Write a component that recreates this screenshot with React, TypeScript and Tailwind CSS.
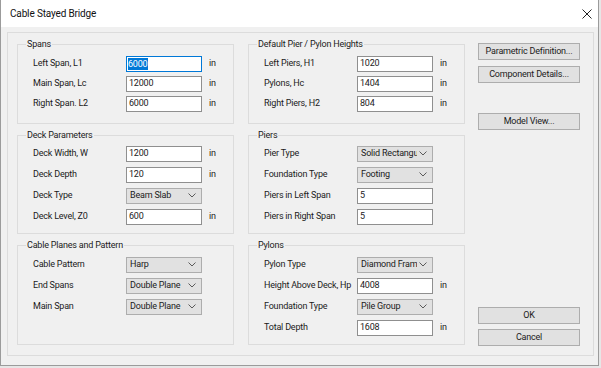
import React from 'react';

type RowKind = 'short' | 'tall';

const rowH: Record<RowKind, string> = {
  short: 'h-[20px]',
  tall: 'h-[21px]',
};

function Chevron() {
  return (
    <svg width="8" height="5" viewBox="0 0 8 5" className="shrink-0">
      <polyline points="0.5,0.5 4,4 7.5,0.5" fill="none" stroke="#5a5a5a" strokeWidth="1" />
    </svg>
  );
}

function TextRow({
  label,
  value,
  unit,
  focused,
  kind = 'tall',
}: {
  label: string;
  value: string;
  unit?: boolean;
  focused?: boolean;
  kind?: RowKind;
}) {
  return (
    <div className={`flex items-center pl-[15px] ${rowH[kind]}`}>
      <span className="w-[93px] shrink-0 whitespace-nowrap">{label}</span>
      <div
        className={
          focused
            ? 'h-[16px] w-[76px] bg-white border border-[#0078d7] flex items-center pl-[1px]'
            : 'h-[16px] w-[76px] bg-white border border-[#8f8f8f] flex items-center pl-[2px]'
        }
      >
        {focused ? (
          <span className="bg-[#0078d7] text-white leading-[12px] pr-[1px]">{value}</span>
        ) : (
          <span>{value}</span>
        )}
      </div>
      {unit && <span className="ml-[7px]">in</span>}
    </div>
  );
}

function SelectRow({ label, value, kind = 'tall' }: { label: string; value: string; kind?: RowKind }) {
  return (
    <div className={`flex items-center pl-[15px] ${rowH[kind]}`}>
      <span className="w-[93px] shrink-0 whitespace-nowrap">{label}</span>
      <div className="h-[16px] w-[76px] bg-[#e1e1e1] border border-[#adadad] flex items-center pl-[3px] pr-[5px] gap-[2px]">
        <span className="flex-1 min-w-0 overflow-hidden whitespace-nowrap">{value}</span>
        <Chevron />
      </div>
    </div>
  );
}

function GroupBox({
  title,
  height,
  pad,
  children,
}: {
  title: string;
  height: string;
  pad: string;
  children: React.ReactNode;
}) {
  return (
    <fieldset className={`border border-[#dcdcdc] ${height} ${pad}`}>
      <legend className="ml-[8px] px-[1px] leading-[12px]">{title}</legend>
      {children}
    </fieldset>
  );
}

function WinButton({ label, className = '' }: { label: string; className?: string }) {
  return (
    <button className={`h-[17px] w-[102px] bg-[#e1e1e1] border border-[#adadad] flex items-center justify-center ${className}`}>
      {label}
    </button>
  );
}

export default function App() {
  return (
    <div className="w-[601px] h-[368px] bg-[#e6e6e6] font-[family-name:Roboto,sans-serif] text-[9px] tracking-[-0.2px] text-[#1b1b1b]">
      <div className="w-[599px] h-[366px] flex flex-col bg-[#f0f0f0] border-l border-r border-b border-[#9b9b9b]">
        {/* title bar */}
        <div className="h-[27px] bg-white flex items-center justify-between pl-[9px] pr-[6px] shrink-0">
          <span className="text-[10px] tracking-[-0.15px] text-[#111]">Cable Stayed Bridge</span>
          <svg width="10" height="10" viewBox="0 0 10 10">
            <path d="M0.5 0.5 L9.5 9.5 M9.5 0.5 L0.5 9.5" stroke="#222" strokeWidth="1" />
          </svg>
        </div>

        <div className="flex-1 pt-[5px] pl-[6px] pr-[4px] pb-[9px] flex">
          <div className="flex-1 border border-[#dcdcdc] flex pt-[5px] pb-[9px] pl-[9px] pr-[13px]">
            {/* left column */}
            <div className="w-[217px] flex flex-col gap-[5px]">
              <GroupBox title="Spans" height="h-[86px]" pad="pt-[4px]">
                <TextRow kind="short" label="Left Span, L1" value="6000" unit focused />
                <TextRow kind="short" label="Main Span, Lc" value="12000" unit />
                <TextRow kind="short" label="Right Span. L2" value="6000" unit />
              </GroupBox>
              <GroupBox title="Deck Parameters" height="h-[105px]" pad="pt-[2px]">
                <TextRow label="Deck Width, W" value="1200" unit />
                <TextRow label="Deck Depth" value="120" unit />
                <SelectRow label="Deck Type" value="Beam Slab" />
                <TextRow label="Deck Level, Z0" value="600" unit />
              </GroupBox>
              <GroupBox title="Cable Planes and Pattern" height="h-[106px]" pad="pt-[3px]">
                <SelectRow label="Cable Pattern" value="Harp" />
                <SelectRow label="End Spans" value="Double Plane" />
                <SelectRow label="Main Span" value="Double Plane" />
              </GroupBox>
            </div>

            {/* right column */}
            <div className="w-[217px] ml-[14px] flex flex-col gap-[5px]">
              <GroupBox title="Default Pier / Pylon Heights" height="h-[86px]" pad="pt-[4px]">
                <TextRow kind="short" label="Left Piers, H1" value="1020" unit />
                <TextRow kind="short" label="Pylons, Hc" value="1404" unit />
                <TextRow kind="short" label="Right Piers, H2" value="804" unit />
              </GroupBox>
              <GroupBox title="Piers" height="h-[105px]" pad="pt-[2px]">
                <SelectRow label="Pier Type" value="Solid Rectangular" />
                <SelectRow label="Foundation Type" value="Footing" />
                <TextRow label="Piers in Left Span" value="5" />
                <TextRow label="Piers in Right Span" value="5" />
              </GroupBox>
              <GroupBox title="Pylons" height="h-[106px]" pad="pt-[3px]">
                <SelectRow label="Pylon Type" value="Diamond Frame" />
                <TextRow label="Height Above Deck, Hp" value="4008" unit />
                <SelectRow label="Foundation Type" value="Pile Group" />
                <TextRow label="Total Depth" value="1608" unit />
              </GroupBox>
            </div>

            {/* buttons */}
            <div className="ml-[13px] flex flex-col">
              <WinButton label="Parametric Definition..." className="mt-[5px]" />
              <WinButton label="Component Details..." className="mt-[6px]" />
              <WinButton label="Model View..." className="mt-[30px]" />
              <WinButton label="OK" className="mt-auto" />
              <WinButton label="Cancel" className="mt-[5px]" />
            </div>
          </div>
        </div>
      </div>
    </div>
  );
}
